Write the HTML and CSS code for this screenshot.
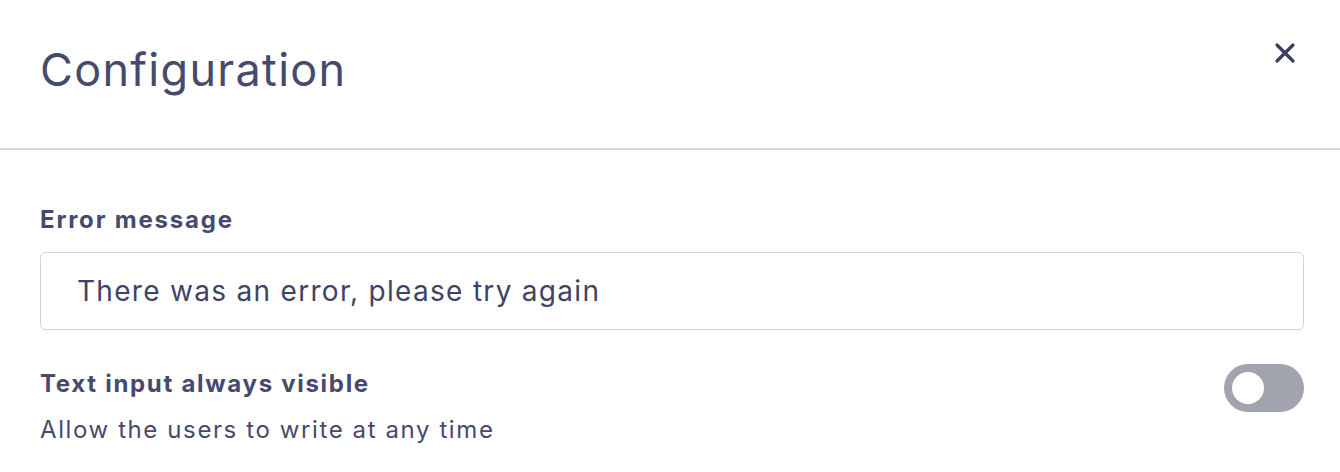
FILE: index.html
```html
<!DOCTYPE html>
<html>
<head>
<meta charset="utf-8">
<link rel="stylesheet" href="styles.css">
</head>
<body>
<div class="panel">
  <header class="head">
    <h1 class="title">Configuration</h1>
    <button class="close" aria-label="Close">
      <svg width="22" height="22" viewBox="0 0 22 22"><path d="M3 3 L19 19 M19 3 L3 19" stroke="#373e5e" stroke-width="3.2" stroke-linecap="round"/></svg>
    </button>
  </header>
  <section class="body">
    <label class="label">Error message</label>
    <div class="input">There was an error, please try again</div>
    <div class="row">
      <div class="row-text">
        <div class="label label-lg">Text input always visible</div>
        <div class="hint">Allow the users to write at any time</div>
      </div>
      <div class="toggle"><span class="knob"></span></div>
    </div>
  </section>
</div>
</body>
</html>
```
FILE: styles.css
```css
* { box-sizing: border-box; }
html, body { margin: 0; padding: 0; background: #fff; }
body { font-family: Inter, "Open Sans", sans-serif; color: #464a6c; }
.panel { width: 1340px; }
.head { display: flex; justify-content: space-between; align-items: flex-start; padding: 0 44px 0 40px; height: 150px; border-bottom: 2px solid #d6d5da; }
.title { margin: 42px 0 0; font-size: 45px; font-weight: 400; line-height: 56px; letter-spacing: 1.3px; }
.close { margin-top: 42px; background: none; border: 0; padding: 0; width: 22px; height: 22px; }
.body { padding: 54px 36px 0 40px; }
.label { display: block; font-size: 24px; font-weight: 700; line-height: 32px; letter-spacing: 1.8px; }
.label-lg { letter-spacing: 1.7px; }
.input { margin-top: 16px; height: 78px; border: 1.5px solid #d3d3d9; border-radius: 6px; padding: 0 36px; display: flex; align-items: center; font-size: 28px; color: #3f4466; letter-spacing: 1.3px; }
.row { display: flex; justify-content: space-between; align-items: flex-start; margin-top: 38px; }
.hint { font-size: 24px; line-height: 32px; margin-top: 14px; letter-spacing: 1.6px; }
.toggle { width: 80px; height: 48px; border-radius: 24px; background: #a1a4ae; margin-top: -4px; padding: 8px; display: flex; }
.knob { width: 32px; height: 32px; border-radius: 50%; background: #fff; }
```
